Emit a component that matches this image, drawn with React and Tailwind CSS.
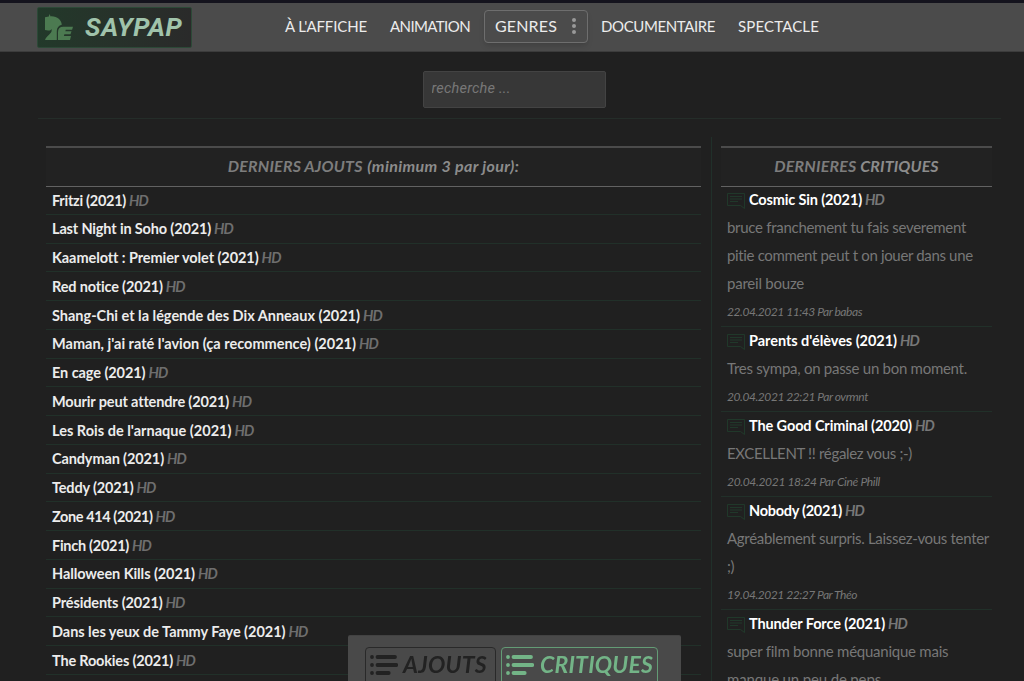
import { useLayoutEffect, useRef, useState } from 'react'

const films = [
  ['Fritzi (2021)', 74],
  ['Last Night in Soho (2021)', 159],
  ['Kaamelott : Premier volet (2021)', 206],
  ['Red notice (2021)', 111],
  ['Shang-Chi et la légende des Dix Anneaux (2021)', 308],
  ["Maman, j'ai raté l'avion (ça recommence) (2021)", 304],
  ['En cage (2021)', 93.5],
  ['Mourir peut attendre (2021)', 176.5],
  ["Les Rois de l'arnaque (2021)", 179.5],
  ['Candyman (2021)', 112],
  ['Teddy (2021)', 81.5],
  ['Zone 414 (2021)', 100.5],
  ['Finch (2021)', 77],
  ['Halloween Kills (2021)', 143],
  ['Présidents (2021)', 110.5],
  ['Dans les yeux de Tammy Faye (2021)', 233.5],
  ['The Rookies (2021)', 121],
]

const reviews = [
  {
    title: ['Cosmic Sin (2021)', 113],
    lines: [['bruce franchement tu fais severement', 239], ['pitie comment peut t on jouer dans une', 246], ['pareil bouze', 77]],
    meta: ['22.04.2021 11:43 Par babas', 135],
  },
  {
    title: ["Parents d'élèves (2021)", 148],
    lines: [['Tres sympa, on passe un bon moment.', 240]],
    meta: ['20.04.2021 22:21 Par ovrmnt', 141],
  },
  {
    title: ['The Good Criminal (2020)', 163],
    lines: [['EXCELLENT !! régalez vous ;-)', 185]],
    meta: ['20.04.2021 18:24 Par Ciné Phill', 153],
  },
  {
    title: ['Nobody (2021)', 93],
    lines: [['Agréablement surpris. Laissez-vous tenter', 262], [';)', 7]],
    meta: ['19.04.2021 22:27 Par Théo', 130],
  },
  {
    title: ['Thunder Force (2021)', 136],
    lines: [['super film bonne méquanique mais', 221], ['manque un peu de peps', 154]],
  },
]

// Spreads the letters so that a label takes the given width
function Fit({ text, width, className = '' }) {
  const ref = useRef(null)
  const [spacing, setSpacing] = useState(0)

  useLayoutEffect(() => {
    const natural = ref.current.getBoundingClientRect().width
    setSpacing((width - natural) / text.length)
  }, [text, width])

  return (
    <span ref={ref} className={`inline-block whitespace-pre ${className}`} style={{ letterSpacing: `${spacing}px` }}>{text}</span>
  )
}

function Logo() {
  return (
    <div className="flex h-[41px] w-[155px] items-center rounded-[2px] border border-[#2c4937] bg-gradient-to-r from-[#22392a] to-[#2a2a2a]">
      <svg viewBox="0 0 28 26" className="mt-[-1px] ml-[7px] h-[26px] w-[28px] shrink-0" fill="#4c7a51">
        <path d="M0 3.2L3.8 2.5 4.6 0l1 2.4C12 2 16.5 6 16.8 10.7c-3.1.8-5 3-5 6.3V26H0c.5-2.5 3.5-4.2 5.8-7.2.8-1.1 1-2 .8-3.8-1 1.4-2 1.7-3.5 1.5L0 16z" />
        <path d="M13 26v-8c0-3.5 2-5.2 5.2-5.2H28l-.9 3h-6.3l-.5 1.4h6.2l-1 3h-6.1l-.5 1.8H26L25 26z" />
      </svg>
      <Fit text="SAYPAP" width={97.5} className="mt-[-1px] ml-[12px] font-[Roboto,sans-serif] text-[26px] leading-[40px] font-bold text-[#a0c3ab] italic" />
    </div>
  )
}

function ChatIcon() {
  return (
    <svg viewBox="0 0 18 16" className="mt-px h-4 w-[18px] shrink-0" fill="none" stroke="#20382a" strokeWidth="1">
      <path d="M.5.5h17v15l-4-3H.5z" />
      <path d="M3 3.5h12M3 6h12M3 8.5h8" />
    </svg>
  )
}

function ListIcon() {
  return (
    <svg viewBox="0 0 28 20" className="h-5 w-7 shrink-0" stroke="currentColor" strokeWidth="3.8" strokeLinecap="round">
      <path d="M2 2h.01M2 10h.01M2 18h.01" />
      <path d="M7.5 2H25M7.5 10H26.3M7.5 18h11.2" />
    </svg>
  )
}

function Heading({ children }) {
  return (
    <h2 className="flex h-[41px] items-center justify-center border-t-2 border-b border-t-[#4b4b4b] border-b-[#626262] bg-[#222222] pb-[2px] text-base font-bold text-[#7d7d7d] italic">{children}</h2>
  )
}

function App() {
  return (
    <div className="h-[681px] overflow-hidden bg-[#202020] font-[Lato,sans-serif] text-[#777777]">
      <header className="flex h-[52px] border-t-[3px] border-b border-t-[#14131d] border-b-[#3c3c3c] bg-[#4b4b4b] pt-1 pl-[37px] text-[15px] text-[#ececec]">
        <Logo />
        <nav className="ml-[93px] flex h-[38px] items-center">
          <Fit text="À L'AFFICHE" width={82} />
          <Fit text="ANIMATION" width={80} className="ml-[23px]" />
          <button className="ml-[14px] flex h-[33px] w-[104px] items-center rounded border border-[#6e6e6e] pl-[10px] text-base shadow-md">
            <Fit text="GENRES" width={62} className="mt-[-1px]" />
            <svg viewBox="0 0 4 16" className="ml-[15px] h-4 w-1" fill="#999999">
              <circle cx="2" cy="2" r="2" />
              <circle cx="2" cy="8" r="2" />
              <circle cx="2" cy="14" r="2" />
            </svg>
          </button>
          <Fit text="DOCUMENTAIRE" width={114} className="ml-[13px]" />
          <Fit text="SPECTACLE" width={81} className="ml-[23px]" />
        </nav>
      </header>

      <div className="mr-[23px] ml-[38px] flex h-[67px] justify-center border-b border-[#242d29] pt-[19px]">
        <input placeholder="recherche ..." className="mr-[11px] h-[37px] w-[183px] rounded-[2px] border border-[#434343] bg-[#373737] px-2 pb-[2px] font-[Roboto,sans-serif] text-[14.5px] tracking-[0.2px] italic placeholder:text-[#777777]" />
      </div>

      <main className="mt-[18px] ml-[46px] flex h-[544px]">
        <section className="w-[655px] pt-[9px]">
          <Heading>
            <Fit text="DERNIERS AJOUTS " width={138.5} className="mr-px" />
            <Fit text="(minimum 3 par jour):" width={152} className="text-[#8c8c8c]" />
          </Heading>
          <div className="-mt-px">
            {films.map(([title, width]) => (
              <div key={title} className="flex h-[28.75px] items-center gap-[3px] border-b border-[#213029] pt-px pl-[6px] text-[14.5px]">
                <Fit text={title} width={width} className="font-bold text-[#ececec]" />
                <Fit text="HD" width={19} className="font-bold text-[#6e6e6e] italic" />
              </div>
            ))}
          </div>
        </section>

        <aside className="ml-[10px] w-[281px] border-l border-[#20302a] pt-[9px] pl-[9px]">
          <Heading>
            <Fit text="DERNIERES " width={86} />
            <Fit text="CRITIQUES" width={78.5} className="text-[#8c8c8c]" />
          </Heading>
          <div className="-mt-px">
            {reviews.map(({ title, lines, meta }) => (
              <article key={title[0]} className="border-b border-[#213029] pl-[6px]">
                <div className="flex h-7 items-center gap-[3px] text-[14.5px]">
                  <ChatIcon />
                  <Fit text={title[0]} width={title[1]} className="ml-px font-bold text-white" />
                  <Fit text="HD" width={19} className="font-bold italic" />
                </div>
                {lines.map(([text, width]) => (
                  <p key={text} className="h-7 text-[15px] leading-[26px]"><Fit text={text} width={width} /></p>
                ))}
                {meta && <p className="h-7 text-xs leading-7 italic"><Fit text={meta[0]} width={meta[1]} /></p>}
              </article>
            ))}
          </div>
        </aside>
      </main>

      <div className="fixed bottom-0 left-[348px] flex h-[46px] w-[333px] gap-[5px] rounded-t-[2px] border-t border-[#424242] bg-[#494949] pt-[11px] pl-[17px] text-[23px] font-bold italic">
        <button className="flex h-[40px] w-[131px] items-start rounded border border-[#292929] pt-[7px] pl-[4px] text-[#222222]">
          <ListIcon />
          <Fit text="AJOUTS" width={84} className="mt-[-1px] ml-[5px] leading-5" />
        </button>
        <button className="flex h-[40px] w-[157px] items-start rounded border border-[#639b75] pt-[7px] pl-[4px] text-[#73b487]">
          <ListIcon />
          <Fit text="CRITIQUES" width={113} className="mt-[-1px] ml-[6px] leading-5" />
        </button>
      </div>
    </div>
  )
}

export default App
